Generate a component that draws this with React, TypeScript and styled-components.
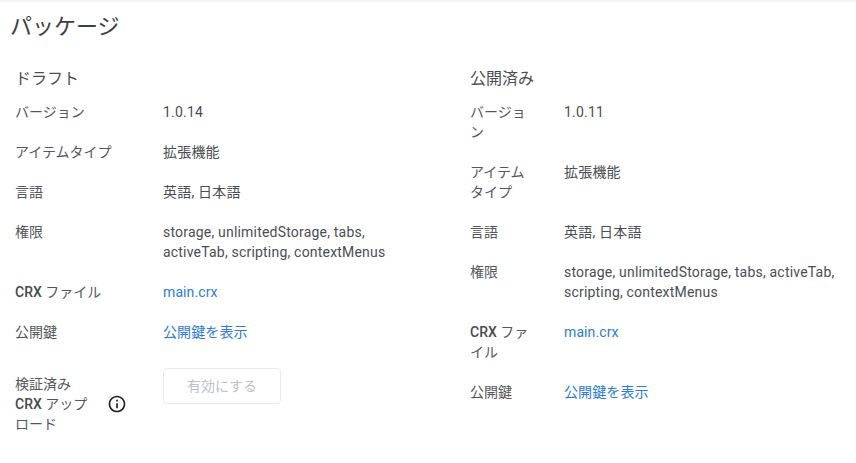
import React from 'react';
import styled, { createGlobalStyle } from 'styled-components';

const GlobalStyle = createGlobalStyle`
  html, body {
    margin: 0;
    padding: 0;
    background: #ffffff;
  }
  body {
    font-family: Roboto, "Noto Sans CJK JP", sans-serif;
    font-size: 14px;
    line-height: 20px;
    color: #3c4043;
  }
`;

const Page = styled.div`
  width: 856px;
  height: 463px;
  box-sizing: border-box;
  border-top: 2px solid #f1f3f4;
  overflow: hidden;
`;

const Title = styled.h1`
  margin: 0;
  padding: 10px 0 0 10px;
  font-size: 22px;
  line-height: 30px;
  font-weight: 400;
  color: #3c4043;
`;

const Columns = styled.div`
  display: flex;
  margin-top: 25px;
`;

const Section = styled.section<{ $left: number; $width: number }>`
  margin-left: ${(p) => p.$left}px;
  width: ${(p) => p.$width}px;
  flex: none;
`;

const SectionTitle = styled.h2`
  margin: 0 0 11px;
  font-size: 16px;
  line-height: 24px;
  font-weight: 400;
  color: #4a4e52;
`;

const Rows = styled.div<{ $labelWidth: number }>`
  display: grid;
  grid-template-columns: ${(p) => p.$labelWidth}px 1fr;
  row-gap: 20px;
`;

const Label = styled.div`
  padding-right: 30px;
  color: #54585c;
`;

const Value = styled.div`
  color: #4a4e52;
  letter-spacing: 0.2px;
`;

const Link = styled.a`
  color: #2b7bdc;
  text-decoration: none;
  letter-spacing: 0.1px;
`;

const Bold = styled.b`
  font-weight: 500;
  color: #46494d;
`;

const VerifiedLabel = styled.div`
  display: flex;
  align-items: center;
  padding-top: 12px;
  color: #54585c;
`;

const VerifiedText = styled.span`
  width: 84px;
  flex: none;
`;

const InfoIcon = styled.svg`
  width: 20px;
  height: 20px;
  margin-left: 8px;
  fill: #202124;
  flex: none;
`;

const ActivateButton = styled.button`
  display: block;
  width: 118px;
  height: 36px;
  margin-top: 6px;
  padding: 0;
  border: 1px solid #e8eaed;
  border-radius: 4px;
  background: #ffffff;
  color: #bdc1c6;
  font: inherit;
`;

const DetailRow = ({ label, children }: { label: React.ReactNode; children: React.ReactNode }) => (
  <>
    <Label>{label}</Label>
    <Value>{children}</Value>
  </>
);

export default function App() {
  return (
    <>
      <GlobalStyle />
      <Page>
        <Title>パッケージ</Title>
        <Columns>
          <Section $left={15} $width={385}>
            <SectionTitle>ドラフト</SectionTitle>
            <Rows $labelWidth={148}>
              <DetailRow label="バージョン">1.0.14</DetailRow>
              <DetailRow label="アイテムタイプ">拡張機能</DetailRow>
              <DetailRow label="言語">英語, 日本語</DetailRow>
              <DetailRow label="権限">storage, unlimitedStorage, tabs, activeTab, scripting, contextMenus</DetailRow>
              <DetailRow label={<><Bold>CRX</Bold> ファイル</>}>
                <Link href="#">main.crx</Link>
              </DetailRow>
              <DetailRow label="公開鍵">
                <Link href="#">公開鍵を表示</Link>
              </DetailRow>
              <VerifiedLabel>
                <VerifiedText>
                  検証済み <Bold>CRX</Bold> アップロード
                </VerifiedText>
                <InfoIcon viewBox="0 0 24 24">
                  <path d="M11 7h2v2h-2zm0 4h2v6h-2zm1-9C6.48 2 2 6.48 2 12s4.48 10 10 10 10-4.48 10-10S17.52 2 12 2zm0 18c-4.41 0-8-3.59-8-8s3.59-8 8-8 8 3.59 8 8-3.59 8-8 8z" />
                </InfoIcon>
              </VerifiedLabel>
              <div>
                <ActivateButton disabled>有効にする</ActivateButton>
              </div>
            </Rows>
          </Section>
          <Section $left={70} $width={372}>
            <SectionTitle>公開済み</SectionTitle>
            <Rows $labelWidth={94}>
              <DetailRow label="バージョン">1.0.11</DetailRow>
              <DetailRow label="アイテムタイプ">拡張機能</DetailRow>
              <DetailRow label="言語">英語, 日本語</DetailRow>
              <DetailRow label="権限">storage, unlimitedStorage, tabs, activeTab, scripting, contextMenus</DetailRow>
              <DetailRow label={<><Bold>CRX</Bold> ファイル</>}>
                <Link href="#">main.crx</Link>
              </DetailRow>
              <DetailRow label="公開鍵">
                <Link href="#">公開鍵を表示</Link>
              </DetailRow>
            </Rows>
          </Section>
        </Columns>
      </Page>
    </>
  );
}
